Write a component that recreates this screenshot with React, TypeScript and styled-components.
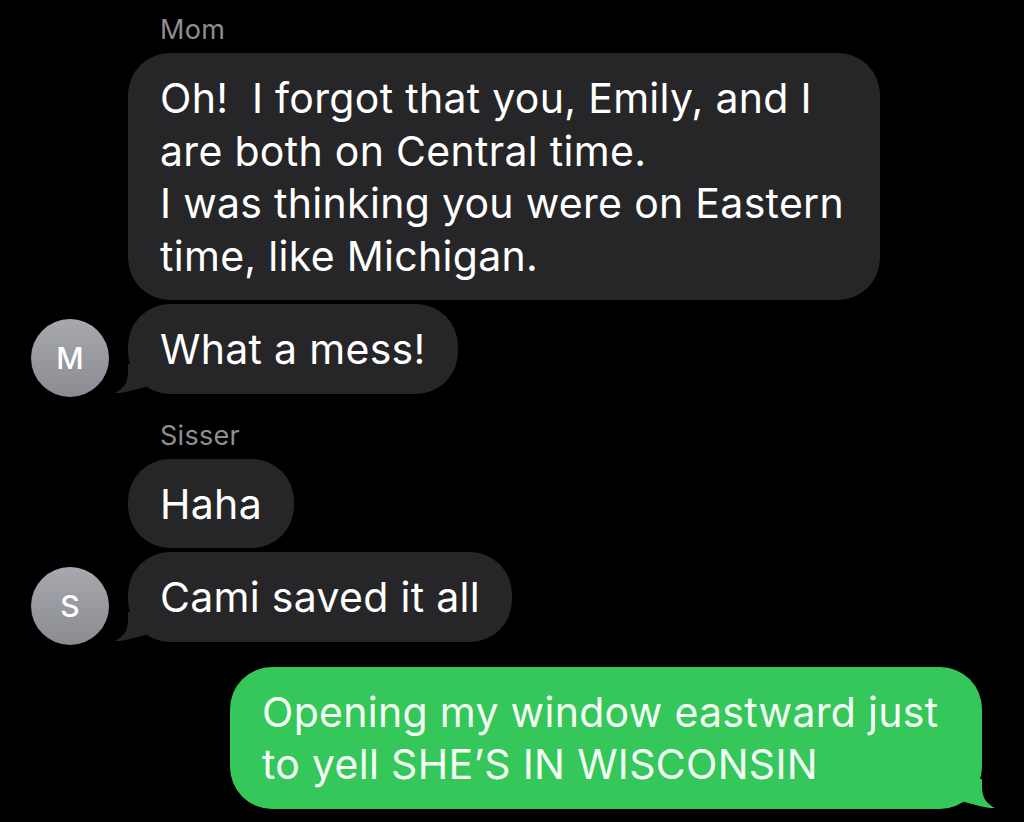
import React from "react";
import styled, { createGlobalStyle } from "styled-components";

const GlobalStyle = createGlobalStyle`
  html, body {
    margin: 0;
    background: #000;
  }
  body {
    font-family: Inter, "Noto Sans", "Liberation Sans", sans-serif;
    -webkit-font-smoothing: antialiased;
  }
`;

const Thread = styled.main`
  width: 1024px;
  height: 822px;
  overflow: hidden;
  display: flex;
  flex-direction: column;
  padding-top: 15px;
  box-sizing: border-box;
`;

const Group = styled.section<{ $gap?: number }>`
  display: flex;
  flex-direction: column;
  gap: 4px;
  margin-top: ${(p) => p.$gap ?? 0}px;
`;

const SenderName = styled.div`
  margin-left: 160px;
  margin-bottom: 4px;
  font-size: 27px;
  line-height: 30px;
  color: #8e8e93;
  letter-spacing: 0.3px;
`;

const Row = styled.div<{ $out?: boolean }>`
  display: flex;
  align-items: flex-end;
  justify-content: ${(p) => (p.$out ? "flex-end" : "flex-start")};
  gap: 19px;
  padding-left: 31px;
  padding-right: 42px;
`;

const AvatarSlot = styled.div`
  width: 78px;
  flex-shrink: 0;
  display: flex;
  align-items: flex-end;
  margin-bottom: -3px;
`;

const Avatar = styled.div`
  width: 78px;
  height: 78px;
  border-radius: 50%;
  background: linear-gradient(180deg, #a8a9af 0%, #8b8c92 100%);
  color: #fff;
  display: flex;
  align-items: center;
  justify-content: center;
  font-size: 30px;
  font-weight: 500;
`;

const Bubble = styled.div<{ $out?: boolean; $wrap?: boolean }>`
  position: relative;
  box-sizing: border-box;
  width: ${(p) => (p.$wrap ? "752px" : "auto")};
  padding: 19px 32px 18px 32px;
  border-radius: 42px;
  background: ${(p) => (p.$out ? "#35c759" : "#262628")};
  color: ${(p) => (p.$out ? "#f4fff6" : "#fff")};
  font-size: 41px;
  line-height: 52.5px;
  letter-spacing: 0.3px;
  white-space: pre;
`;

const Tail = styled.svg<{ $out?: boolean }>`
  position: absolute;
  bottom: 0;
  width: 36px;
  height: 30px;
  ${(p) => (p.$out ? "right: -13px; transform: scaleX(-1);" : "left: -13px;")}
`;

const Line = styled.span`
  display: block;
`;

function BubbleTail({ out, color }: { out?: boolean; color: string }) {
  return (
    <Tail $out={out} viewBox="0 0 36 30">
      <path
        d="M13 0 L13 8 C13 19 8 25 0 29 C8 29.5 20 26 33 22 L33 0 Z"
        fill={color}
      />
    </Tail>
  );
}

type Msg = { lines: string[]; wrap?: boolean; tail?: boolean };

function Incoming({ name, initial, gap, messages }: { name: string; initial: string; gap?: number; messages: Msg[] }) {
  return (
    <Group $gap={gap}>
      <SenderName>{name}</SenderName>
      {messages.map((m, i) => (
        <Row key={i}>
          <AvatarSlot>{m.tail && <Avatar>{initial}</Avatar>}</AvatarSlot>
          <Bubble $wrap={m.wrap}>
            {m.lines.map((l) => (
              <Line key={l}>{l}</Line>
            ))}
            {m.tail && <BubbleTail color="#262628" />}
          </Bubble>
        </Row>
      ))}
    </Group>
  );
}

export default function App() {
  return (
    <>
      <GlobalStyle />
      <Thread>
        <Incoming
          name="Mom"
          initial="M"
          messages={[
            {
              wrap: true,
              lines: [
                "Oh!  I forgot that you, Emily, and I",
                "are both on Central time.",
                "I was thinking you were on Eastern",
                "time, like Michigan.",
              ],
            },
            { lines: ["What a mess!"], tail: true },
          ]}
        />
        <Incoming
          name="Sisser"
          initial="S"
          gap={27}
          messages={[
            { lines: ["Haha"] },
            { lines: ["Cami saved it all"], tail: true },
          ]}
        />
        <Group $gap={25}>
          <Row $out>
            <Bubble $out $wrap>
              <Line>Opening my window eastward just</Line>
              <Line>to yell SHE’S IN WISCONSIN</Line>
              <BubbleTail out color="#35c759" />
            </Bubble>
          </Row>
        </Group>
      </Thread>
    </>
  );
}
